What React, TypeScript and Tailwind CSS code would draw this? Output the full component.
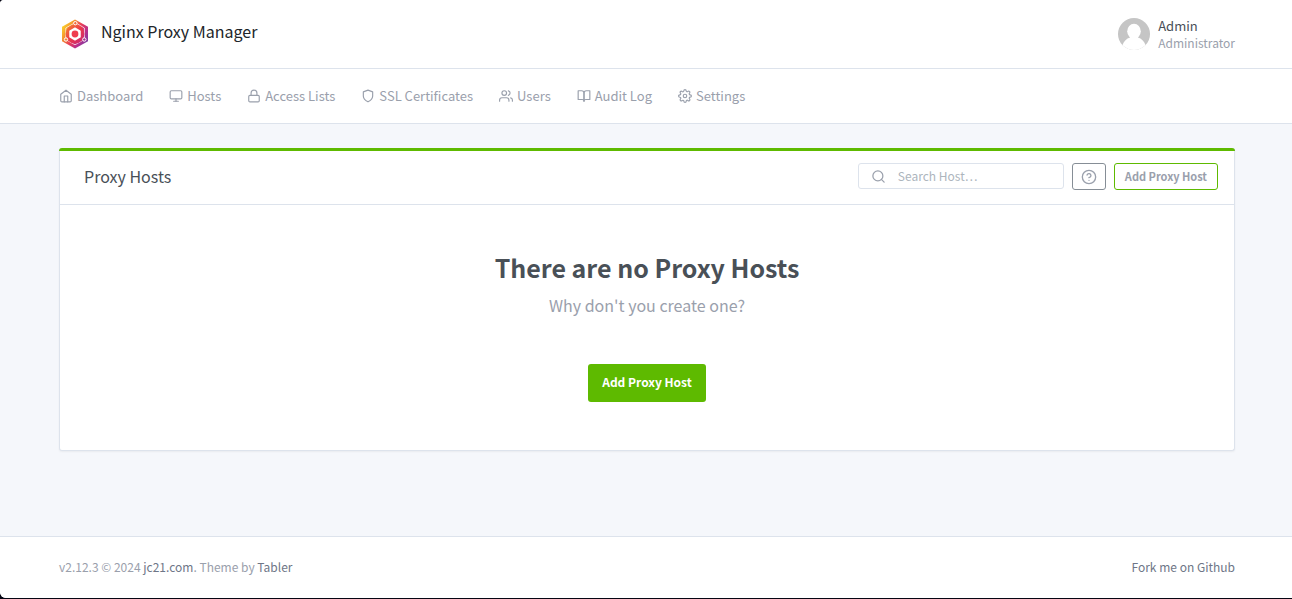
import type { ReactNode } from "react";
import type { IconType } from "react-icons";
import {
  FiBookOpen,
  FiHelpCircle,
  FiHome,
  FiLock,
  FiMonitor,
  FiSearch,
  FiSettings,
  FiShield,
  FiUsers,
} from "react-icons/fi";

const navItems: { label: string; icon: IconType }[] = [
  { label: "Dashboard", icon: FiHome },
  { label: "Hosts", icon: FiMonitor },
  { label: "Access Lists", icon: FiLock },
  { label: "SSL Certificates", icon: FiShield },
  { label: "Users", icon: FiUsers },
  { label: "Audit Log", icon: FiBookOpen },
  { label: "Settings", icon: FiSettings },
];

function Container({ children }: { children: ReactNode }) {
  return <div className="mx-auto w-full max-w-[1200px] pr-[11px] pl-[13px]">{children}</div>;
}

function Logo() {
  return (
    <svg viewBox="0 0 32 32" className="size-8" aria-hidden="true">
      <defs>
        <linearGradient id="logo-fill" x1="0" y1="0.15" x2="1" y2="0.85">
          <stop offset="0" stopColor="#fbe02d" />
          <stop offset="0.25" stopColor="#f59a2c" />
          <stop offset="0.5" stopColor="#ea3f55" />
          <stop offset="0.75" stopColor="#b72e8c" />
          <stop offset="1" stopColor="#6b3fa8" />
        </linearGradient>
        <linearGradient id="logo-core" x1="0" y1="0" x2="1" y2="1">
          <stop offset="0" stopColor="#f58a2e" />
          <stop offset="0.5" stopColor="#ec3a48" />
          <stop offset="1" stopColor="#c4267c" />
        </linearGradient>
      </defs>
      <path d="M16 1.5 29 8.8v14.400L16 30.500 3 23.200V8.800z" fill="url(#logo-fill)" />
      <path
        d="M14.500 5.600 6.800 10v10M18 5.600 25.400 10v10M8.500 22.500 16 26.800l7.500-4.300"
        fill="none"
        stroke="#fff"
        strokeOpacity="0.7"
        strokeWidth="1"
      />
      <circle cx="16" cy="16" r="9.400" fill="url(#logo-core)" />
      <path
        d="M16 10.200l5 2.900v5.800l-5 2.900-5-2.900v-5.800z"
        fill="#fff"
        stroke="#fff"
        strokeWidth="1.500"
        strokeLinejoin="round"
      />
      <circle cx="16" cy="16" r="3.400" fill="#ee3e4f" />
      <g stroke="#fff" strokeWidth="1">
        <circle cx="16.300" cy="5.200" r="1.700" fill="#f26b3c" />
        <circle cx="7" cy="21.500" r="1.700" fill="#f0853a" />
        <circle cx="25.300" cy="21.500" r="1.700" fill="#a8328f" />
      </g>
    </svg>
  );
}

function Avatar() {
  return (
    <svg viewBox="0 0 32 32" className="size-8" aria-hidden="true">
      <defs>
        <clipPath id="avatar-clip">
          <circle cx="16" cy="16" r="16" />
        </clipPath>
      </defs>
      <g clipPath="url(#avatar-clip)">
        <rect width="32" height="32" fill="#c5c5c5" />
        <ellipse cx="16" cy="13.200" rx="6.800" ry="7.400" fill="#fff" />
        <path d="M12 18h8v1.500c3.500 1 6 3.500 7.500 7.500V32h-23v-5c1.500-4 4-6.500 7.500-7.500z" fill="#fff" />
      </g>
    </svg>
  );
}

export default function App() {
  return (
    <div className="min-h-screen bg-[#060613] pb-px font-['Noto_Sans_CJK_SC',sans-serif] text-[13px] leading-5 text-[#9aa0ac]">
      <div className="flex min-h-[calc(100vh-1px)] flex-col overflow-hidden rounded-tl-sm rounded-bl-md bg-[#f5f7fb]">
        <header className="border-b border-[#dde3ec] bg-white">
          <Container>
            <div className="flex h-17 items-center justify-between">
              <a href="#home" className="flex items-center gap-[10px] text-base text-[#212529]">
                <Logo />
                <span className="pb-[6px]">Nginx Proxy Manager</span>
              </a>
              <a href="#profile" className="flex items-center gap-2">
                <Avatar />
                <span className="flex flex-col">
                  <span className="text-[13px] leading-[18px] text-[#495057]">Admin</span>
                  <span className="text-[12px] leading-4">Administrator</span>
                </span>
              </a>
            </div>
          </Container>
        </header>

        <nav className="border-b border-[#dde3ec] bg-white">
          <Container>
            <ul className="flex h-[54px] items-center gap-[26px]">
              {navItems.map(({ label, icon: Icon }) => (
                <li key={label}>
                  <a href="#nav" className="flex items-center gap-1">
                    <Icon className="size-[14px]" aria-hidden="true" />
                    {label}
                  </a>
                </li>
              ))}
            </ul>
          </Container>
        </nav>

        <main className="flex-1 py-6">
          <Container>
            <section className="rounded-[3px] border border-t-0 border-[#dde3ec] bg-white shadow-[0_1px_2px_rgba(0,0,0,0.05)]">
              <div className="-mx-px h-[3px] rounded-t-[3px] bg-[#5eba00]" />
              <div className="flex h-[54px] items-center justify-between border-b border-[#dde3ec] pr-4 pb-[2px] pl-6">
                <h1 className="pb-[2px] text-base text-[#495057]">Proxy Hosts</h1>
                <form className="flex gap-2" onSubmit={(event) => event.preventDefault()}>
                  <label className="flex h-[26px] w-[206px] items-center rounded-[3px] border border-[#dde3ec] pl-3">
                    <FiSearch className="size-[15px] shrink-0" aria-hidden="true" />
                    <input
                      type="text"
                      aria-label="Search Host"
                      placeholder="Search Host…"
                      className="ml-3 w-full min-w-0 text-[12px] text-[#495057] outline-none placeholder:text-[#adb5bd]"
                    />
                  </label>
                  <button
                    type="button"
                    aria-label="Help"
                    className="flex h-[27px] w-[34px] items-center justify-center rounded-[3px] border border-[#868e96]"
                  >
                    <FiHelpCircle className="size-4" aria-hidden="true" />
                  </button>
                  <button
                    type="button"
                    className="h-[27px] rounded-[3px] border border-[#5eba00] px-[10px] pb-[2px] text-[11px] leading-4 font-bold"
                  >
                    Add Proxy Host
                  </button>
                </form>
              </div>
              <div className="flex flex-col items-center pt-[46px] pb-12 text-center">
                <h2 className="text-[25px] leading-8 font-bold text-[#495057]">There are no Proxy Hosts</h2>
                <p className="mt-[10px] text-base leading-6">Why don't you create one?</p>
                <button
                  type="button"
                  className="mt-[47px] h-[38px] rounded-[3px] bg-[#5eba00] px-[14px] pb-[2px] text-[12px] font-bold text-white"
                >
                  Add Proxy Host
                </button>
              </div>
            </section>
          </Container>
        </main>

        <footer className="border-t border-[#dde3ec] bg-white text-[12px]">
          <Container>
            <div className="flex h-[61px] items-center justify-between pb-[2px]">
              <p>
                v2.12.3 © 2024{" "}
                <a href="#author" className="text-[#6e7687]">
                  jc21.com
                </a>
                . Theme by{" "}
                <a href="#theme" className="text-[#6e7687]">
                  Tabler
                </a>
              </p>
              <a href="#github" className="text-[#6e7687]">
                Fork me on Github
              </a>
            </div>
          </Container>
        </footer>
      </div>
    </div>
  );
}
